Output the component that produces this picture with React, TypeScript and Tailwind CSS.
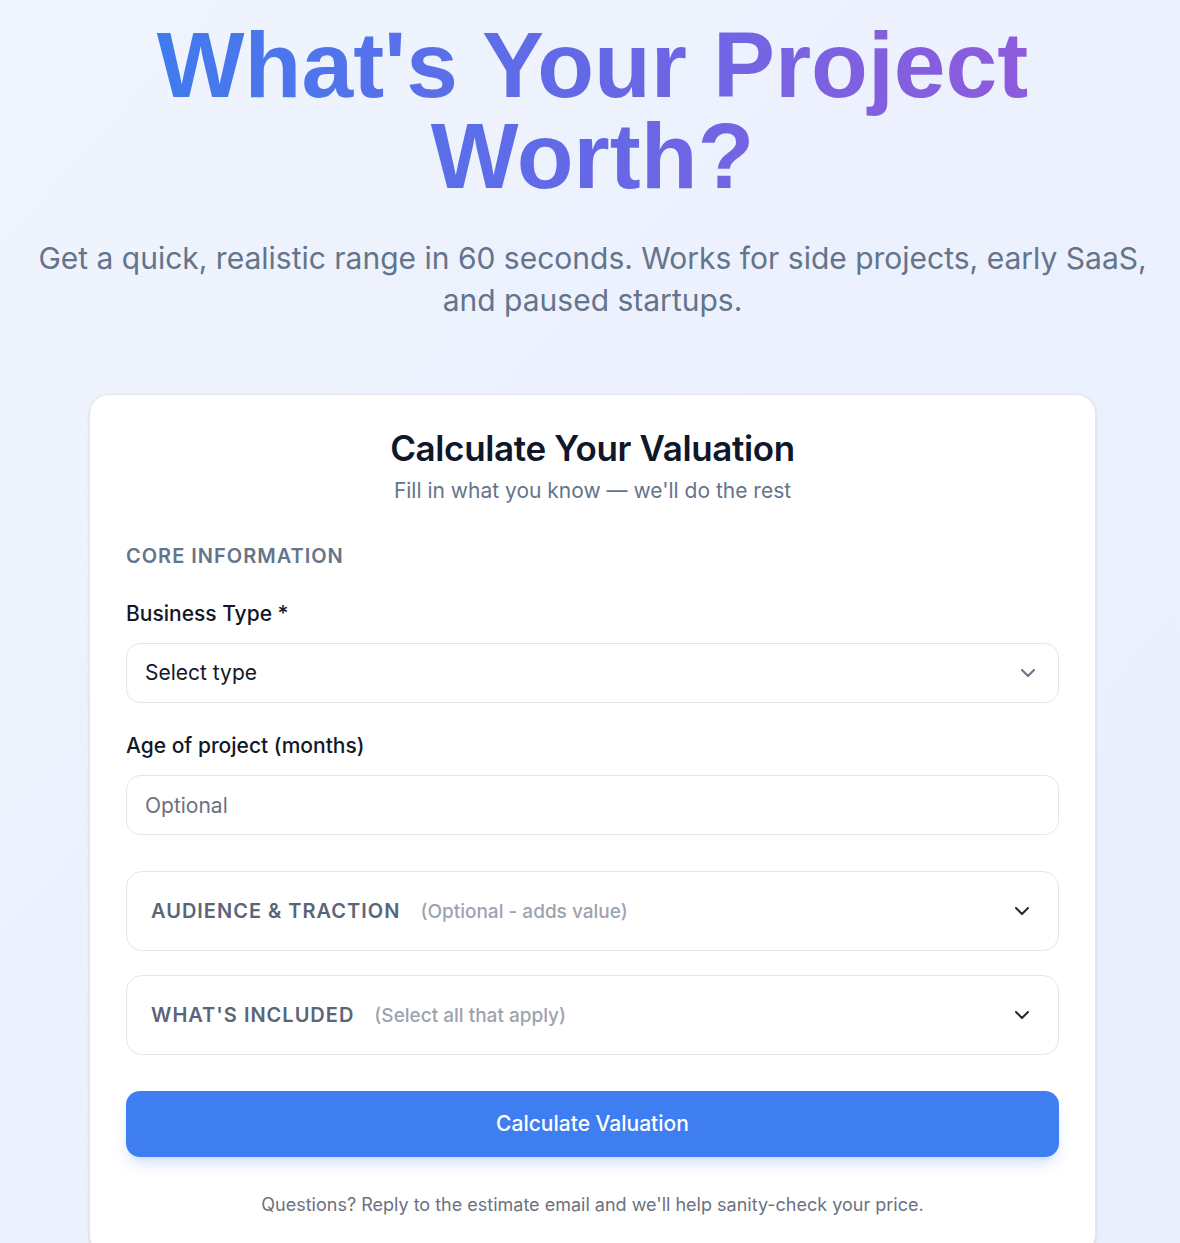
import { useState } from "react";

function Chevron({ className }: { className?: string }) {
  return (
    <svg className={className} width="14" height="8" viewBox="0 0 14 8" fill="none" stroke="currentColor" strokeWidth="2" strokeLinecap="round" strokeLinejoin="round">
      <path d="M1 1l6 6 6-6" />
    </svg>
  );
}

function Section({ title, hint }: { title: string; hint: string }) {
  const [open, setOpen] = useState(false);
  return (
    <div className="rounded-2xl border border-[#e3e6ee] bg-white">
      <button
        type="button"
        onClick={() => setOpen(!open)}
        className="w-full h-[78px] flex items-center justify-between pl-6 pr-[29px] text-left"
      >
        <span className="flex items-baseline">
          <span className="text-[20px] font-semibold tracking-[0.05em] text-[#5b6577] uppercase">{title}</span>
          <span className="ml-[20px] text-[19px] font-medium text-[#9ca3af]">{hint}</span>
        </span>
        <Chevron className={`text-[#1f2937] transition-transform ${open ? "rotate-180" : ""}`} />
      </button>
    </div>
  );
}

export default function App() {
  return (
    <div
      className="min-h-screen bg-gradient-to-br from-[#eff4fe] to-[#e8eefc] pl-[5px] pt-5 pb-10"
      style={{ fontFamily: "Inter, 'Noto Sans', sans-serif" }}
    >
      <h1
        className="w-[880px] mx-auto text-center text-[93px] leading-[91px] font-bold bg-gradient-to-r from-[#3f7bee] via-[#6468e6] to-[#8e5bdc] bg-clip-text text-transparent"
        style={{ fontFamily: "'Liberation Sans', Arial, sans-serif" }}
      >
        What's Your Project Worth?
      </h1>

      <p className="max-w-[1120px] mx-auto mt-[35px] text-center text-[30px] leading-[42px] text-[#64748b]">
        Get a quick, realistic range in 60 seconds. Works for side projects, early SaaS, and paused startups.
      </p>

      {/* Valuation form card */}
      <div className="w-[1007px] mx-auto mt-[73px] bg-white rounded-[20px] border border-[#e2e6ef] shadow-sm px-9 pt-[34px] pb-9">
        <div className="text-center">
          <h2 className="text-[35px] leading-[38px] font-semibold text-[#0f172a] tracking-[-0.01em]">Calculate Your Valuation</h2>
          <p className="mt-[10px] text-[21px] leading-[28px] text-[#64748b]">Fill in what you know — we'll do the rest</p>
        </div>

        <div className="mt-[37px] text-[20px] leading-[28px] font-semibold tracking-[0.05em] text-[#64748b] uppercase">
          Core Information
        </div>

        <label className="block mt-[30px] text-[21px] leading-[28px] font-medium text-[#111827]">Business Type *</label>
        <div className="mt-[15px] h-[60px] rounded-[14px] border border-[#e3e6ee] bg-white flex items-center justify-between pl-[18px] pr-[23px]">
          <span className="text-[21px] text-[#111827]">Select type</span>
          <Chevron className="text-[#6b7280]" />
        </div>

        <label className="block mt-[29px] text-[21px] leading-[28px] font-medium text-[#111827]">Age of project (months)</label>
        <input
          placeholder="Optional"
          className="mt-[15px] w-full h-[60px] rounded-[14px] border border-[#e3e6ee] bg-white px-[18px] text-[21px] text-[#111827] placeholder:text-[#6b7280] outline-none"
        />

        <div className="mt-9 flex flex-col gap-6">
          <Section title="Audience & Traction" hint="(Optional - adds value)" />
          <Section title="What's Included" hint="(Select all that apply)" />
        </div>

        <button
          type="button"
          className="mt-9 w-full h-[66px] rounded-[14px] bg-[#3f7ef1] text-white text-[21px] font-medium shadow-lg shadow-[#3f7ef1]/20"
        >
          Calculate Valuation
        </button>

        <p className="mt-[34px] text-center text-[18px] text-[#6b7280]">
          Questions? Reply to the estimate email and we'll help sanity-check your price.
        </p>
      </div>
    </div>
  );
}
